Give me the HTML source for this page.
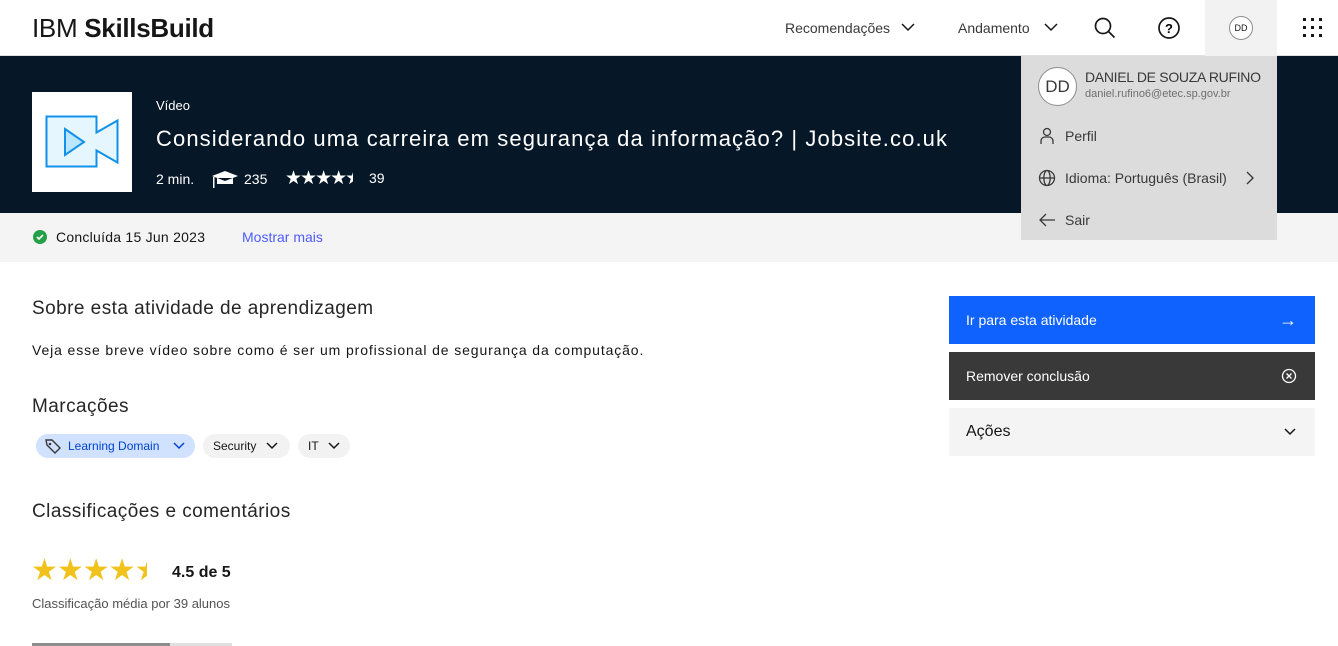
<!DOCTYPE html>
<html><head><meta charset="utf-8"><style>
*{box-sizing:border-box;margin:0;padding:0}
body{width:1338px;height:646px;overflow:hidden;background:#fff;font-family:"Liberation Sans",sans-serif;color:#161616;position:relative}
.abs{position:absolute}
.hdr{height:56px;border-bottom:1px solid #e0e0e0}
.hero{top:56px;left:0;width:1338px;height:157px;background:#061727}
.bar{top:213px;left:0;width:1338px;height:49px;background:#f4f4f4}
.t{position:absolute;white-space:nowrap}
.tag{position:absolute;top:434px;height:24px;border-radius:12px;background:#f2f2f2;font-size:12px;line-height:24px;padding:0 10px}
.btn{position:absolute;left:949px;width:366px;height:48px;font-size:14px;line-height:48px;padding-left:17px}
.star{color:#f1c21b;font-size:30px}
.menu{left:1021px;top:56px;width:256px;height:184px;background:#dcdcdc}
.h{font-size:19px;letter-spacing:0.45px;color:#262626}
</style></head><body>
<div class="abs hdr" style="left:0;top:0;width:1338px"></div>
<div class="t" style="left:32px;top:13px;font-size:26px;letter-spacing:-0.3px">IBM <b>SkillsBuild</b></div>
<div class="t" style="left:785px;top:20px;font-size:14px;color:#393939">Recomendações</div>
<svg class="abs" style="left:901px;top:22px" width="14" height="10"><path d="M1 2l6 6 6-6" stroke="#161616" stroke-width="1.5" fill="none"/></svg>
<div class="t" style="left:958px;top:20px;font-size:14px;color:#393939">Andamento</div>
<svg class="abs" style="left:1044px;top:22px" width="14" height="10"><path d="M1 2l6 6 6-6" stroke="#161616" stroke-width="1.5" fill="none"/></svg>
<svg class="abs" style="left:1093px;top:16px" width="24" height="24"><circle cx="10" cy="10" r="7.5" stroke="#161616" stroke-width="1.7" fill="none"/><path d="M15.5 15.5l6 6" stroke="#161616" stroke-width="1.7"/></svg>
<svg class="abs" style="left:1157px;top:16px" width="24" height="24"><circle cx="12" cy="12" r="10" stroke="#161616" stroke-width="1.7" fill="none"/><text x="12" y="17" font-size="13" text-anchor="middle" font-family="Liberation Sans" font-weight="bold">?</text></svg>
<div class="abs" style="left:1205px;top:0;width:72px;height:56px;background:#f2f2f2"></div>
<div class="abs" style="left:1229px;top:16px;width:24px;height:24px;border:1px solid #8d8d8d;border-radius:50%;background:#fff;font-size:9px;text-align:center;line-height:22px">DD</div>
<svg class="abs" style="left:1303px;top:18px" width="22" height="20"><g fill="#161616"><rect x="0" y="0" width="3" height="3"/><rect x="8" y="0" width="3" height="3"/><rect x="16" y="0" width="3" height="3"/><rect x="0" y="8" width="3" height="3"/><rect x="8" y="8" width="3" height="3"/><rect x="16" y="8" width="3" height="3"/><rect x="0" y="16" width="3" height="3"/><rect x="8" y="16" width="3" height="3"/><rect x="16" y="16" width="3" height="3"/></g></svg>

<div class="abs hero"></div>
<div class="abs" style="left:32px;top:92px;width:100px;height:100px;background:#fff"></div>
<svg class="abs" style="left:45px;top:115px" width="75" height="55"><path d="M1.5 1.5h50v16l21-12v42l-21-12v16h-50z" fill="#e5f6ff" stroke="#1192e8" stroke-width="2"/><path d="M20 14l19 13-19 13z" fill="#bae6ff" stroke="#1192e8" stroke-width="2"/></svg>
<div class="t" style="left:156px;top:98px;font-size:13px;color:#fff">Vídeo</div>
<div class="t" style="left:156px;top:126px;font-size:22px;color:#fff;letter-spacing:1.1px">Considerando uma carreira em segurança da informação? | Jobsite.co.uk</div>
<div class="t" style="left:156px;top:171px;font-size:14px;color:#fff">2 min.</div>
<svg class="abs" style="left:211px;top:170px" width="28" height="20"><path d="M1 6l13-5 13 5-13 5z M6 8v6h16V8" fill="#fff"/><rect x="2" y="7" width="1.5" height="11" fill="#fff"/></svg>
<div class="t" style="left:244px;top:171px;font-size:14px;color:#fff">235</div>
<div class="t" style="left:285px;top:167px;font-size:19px;color:#fff;letter-spacing:-2px">★★★★<span style="display:inline-block;width:8px;overflow:hidden;vertical-align:top">★</span></div>
<div class="t" style="left:369px;top:170px;font-size:14px;color:#fff">39</div>

<div class="abs bar"></div>
<svg class="abs" style="left:33px;top:230px" width="14" height="14"><circle cx="7" cy="7" r="7" fill="#24a148"/><path d="M4 7l2 2 4-4" stroke="#fff" stroke-width="1.6" fill="none"/></svg>
<div class="t" style="left:56px;top:229px;font-size:14px;letter-spacing:0.25px">Concluída 15 Jun 2023</div>
<div class="t" style="left:242px;top:229px;font-size:14px;color:#4f5cff">Mostrar mais</div>

<div class="t h" style="left:32px;top:298px">Sobre esta atividade de aprendizagem</div>
<div class="t" style="left:32px;top:342px;font-size:14px;letter-spacing:0.88px">Veja esse breve vídeo sobre como é ser um profissional de segurança da computação.</div>
<div class="t h" style="left:32px;top:396px">Marcações</div>
<div class="tag" style="left:36px;width:159px;background:#d0e2ff;color:#0043ce;padding-left:32px">Learning Domain</div>
<svg class="abs" style="left:44px;top:438px" width="18" height="16"><path d="M2 2h6l8 8-5 5-8-8z" stroke="#393939" stroke-width="1.4" fill="none"/><circle cx="6" cy="6" r="1.3" fill="#393939"/></svg>
<svg class="abs" style="left:172px;top:441px" width="14" height="10"><path d="M2 2l5 5 5-5" stroke="#0043ce" stroke-width="1.5" fill="none"/></svg>
<div class="tag" style="left:203px;width:87px">Security</div>
<svg class="abs" style="left:265px;top:441px" width="14" height="10"><path d="M2 2l5 5 5-5" stroke="#161616" stroke-width="1.5" fill="none"/></svg>
<div class="tag" style="left:298px;width:52px">IT</div>
<svg class="abs" style="left:327px;top:441px" width="14" height="10"><path d="M2 2l5 5 5-5" stroke="#161616" stroke-width="1.5" fill="none"/></svg>

<div class="t h" style="left:32px;top:501px">Classificações e comentários</div>
<div class="t star" style="left:31px;top:553px;letter-spacing:-1px">★★★★<span style="display:inline-block;width:12px;overflow:hidden;vertical-align:top">★</span></div>
<div class="t" style="left:172px;top:564px;font-size:16px;font-weight:bold">4.5 de 5</div>
<div class="t" style="left:32px;top:596px;font-size:13px;color:#525252">Classificação média por 39 alunos</div>
<div class="abs" style="left:32px;top:643px;width:138px;height:3px;background:#8d8d8d"></div>
<div class="abs" style="left:170px;top:643px;width:62px;height:3px;background:#e0e0e0"></div>

<div class="btn" style="top:296px;background:#0f62fe;color:#fff">Ir para esta atividade<span style="position:absolute;right:18px;font-size:18px">→</span></div>
<div class="btn" style="top:352px;background:#393939;color:#fff">Remover conclusão<svg style="position:absolute;right:18px;top:16px" width="16" height="16"><circle cx="8" cy="8" r="6.5" stroke="#fff" stroke-width="1.3" fill="none"/><path d="M5.5 5.5l5 5M10.5 5.5l-5 5" stroke="#fff" stroke-width="1.3"/></svg></div>
<div class="btn" style="top:408px;background:#f4f4f4;font-size:16px">Ações<svg style="position:absolute;right:18px;top:19px" width="14" height="10"><path d="M2 2l5 5 5-5" stroke="#161616" stroke-width="1.5" fill="none"/></svg></div>

<div class="abs menu"></div>
<div class="abs" style="left:1038px;top:67px;width:39px;height:39px;border:1px solid #8d8d8d;border-radius:50%;background:#fff;font-size:17px;text-align:center;line-height:37px;color:#393939">DD</div>
<div class="t" style="left:1085px;top:69px;font-size:14px;color:#393939;letter-spacing:-0.3px">DANIEL DE SOUZA RUFINO</div>
<div class="t" style="left:1085px;top:88px;font-size:11px;color:#6f6f6f">daniel.rufino6@etec.sp.gov.br</div>
<svg class="abs" style="left:1039px;top:127px" width="16" height="18"><circle cx="8" cy="5" r="3.5" stroke="#393939" stroke-width="1.3" fill="none"/><path d="M2 17v-3a4 4 0 014-4h4a4 4 0 014 4v3" stroke="#393939" stroke-width="1.3" fill="none"/></svg>
<div class="t" style="left:1065px;top:128px;font-size:14px;color:#393939">Perfil</div>
<svg class="abs" style="left:1038px;top:169px" width="18" height="18"><circle cx="9" cy="9" r="7.5" stroke="#393939" stroke-width="1.3" fill="none"/><ellipse cx="9" cy="9" rx="3.2" ry="7.5" stroke="#393939" stroke-width="1.3" fill="none"/><path d="M1.5 9h15" stroke="#393939" stroke-width="1.3"/></svg>
<div class="t" style="left:1065px;top:170px;font-size:14px;color:#393939">Idioma: Português (Brasil)</div>
<svg class="abs" style="left:1245px;top:171px" width="10" height="14"><path d="M2 1l6 6-6 6" stroke="#393939" stroke-width="1.4" fill="none"/></svg>
<svg class="abs" style="left:1039px;top:213px" width="17" height="14"><path d="M16 7H2M7 1L1 7l6 6" stroke="#393939" stroke-width="1.3" fill="none"/></svg>
<div class="t" style="left:1065px;top:212px;font-size:14px;color:#393939">Sair</div>
</body></html>
